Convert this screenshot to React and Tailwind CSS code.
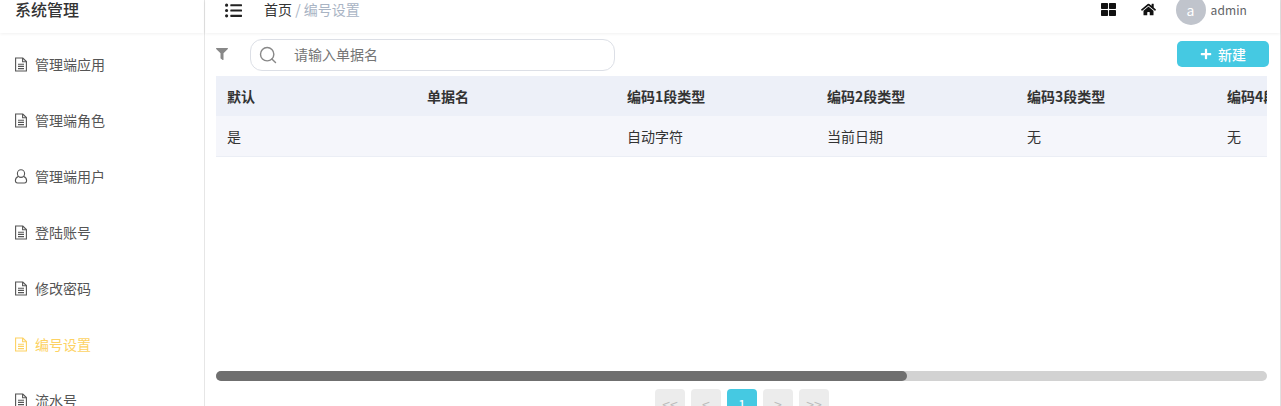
import React from 'react';
import { Search } from 'lucide-react';
import { FaThLarge, FaHome, FaListUl, FaFilter, FaPlus } from 'react-icons/fa';

const FileIcon = () => (
  <svg width="14" height="15" viewBox="0 0 14 15" fill="none" stroke="currentColor" strokeWidth="1.1">
    <path d="M1.6 1h7.2l3.6 3.6V14H1.6z" />
    <path d="M8.6 1v3.8h3.8" />
    <path d="M4 7.2h6M4 9.4h6M4 11.6h6" />
  </svg>
);

const UserIcon = () => (
  <svg width="14" height="15" viewBox="0 0 14 15" fill="none" stroke="currentColor" strokeWidth="1.1">
    <ellipse cx="7" cy="4.6" rx="3.6" ry="3.8" />
    <path d="M4.2 7.6C2.4 8.4 1.4 9.8 1.4 11.6c0 1.6.8 2.4 2.2 2.4h6.8c1.4 0 2.2-.8 2.2-2.4 0-1.8-1-3.2-2.8-4" />
  </svg>
);

const menus = [
  { name: '管理端应用', icon: <FileIcon /> },
  { name: '管理端角色', icon: <FileIcon /> },
  { name: '管理端用户', icon: <UserIcon /> },
  { name: '登陆账号', icon: <FileIcon /> },
  { name: '修改密码', icon: <FileIcon /> },
  { name: '编号设置', icon: <FileIcon />, active: true },
  { name: '流水号', icon: <FileIcon /> },
];

const columns = ['默认', '单据名', '编码1段类型', '编码2段类型', '编码3段类型', '编码4段类型'];
const row = ['是', '', '自动字符', '当前日期', '无', '无'];
const pages = ['<<', '<', '1', '>', '>>'];

export default function App() {
  return (
    <div className="flex h-[406px] w-[1281px] overflow-hidden bg-white text-[14px] text-[#333] font-['Noto_Sans_CJK_SC',sans-serif]">
      <aside className="w-[205px] shrink-0 border-r border-[#e6e6e6]">
        <div className="flex h-[33px] items-end pb-[12px] pl-[15px] text-[16px] font-medium leading-[24px] text-[#333] shadow-[0_1px_3px_rgba(0,0,0,0.06)]">
          系统管理
        </div>
        <nav className="pt-[3px]">
          {menus.map((m) => (
            <div
              key={m.name}
              className={`flex h-[56px] items-center gap-[7px] pl-[14px] ${m.active ? 'text-[#fdd263]' : 'text-[#555]'}`}
            >
              {m.icon}
              <span>{m.name}</span>
            </div>
          ))}
        </nav>
      </aside>

      <main className="flex min-w-0 flex-1 flex-col border-r border-[#e0e0e0]">
        <header className="flex h-[33px] shrink-0 items-center pb-[13px] shadow-[0_1px_3px_rgba(0,0,0,0.06)]">
          <FaListUl className="ml-[20px] text-[17px] text-[#222]" />
          <div className="mb-[2px] ml-[22px] whitespace-nowrap">
            <span className="text-[#333]">首页</span>
            <span className="text-[#a9b4c4]"> / 编号设置</span>
          </div>
          <div className="ml-auto flex items-center">
            <FaThLarge className="mb-[2px] text-[15px] text-[#111]" />
            <FaHome className="mb-[2px] ml-[25px] text-[15px] text-[#111]" />
            <div className="ml-[20px] flex h-[30px] w-[30px] items-center justify-center rounded-full bg-[#c0c4cc] text-[14px] text-white">
              a
            </div>
            <span className="ml-[5px] mr-[33px] text-[12px] tracking-[0.1px] text-[#606266]">admin</span>
          </div>
        </header>

        <div className="flex h-[43px] shrink-0 items-center pl-[11px] pr-[11px] pt-[1px]">
          <FaFilter className="mb-[2px] text-[12px] text-[#888]" />
          <div className="ml-[22px] flex h-[32px] w-[365px] items-center rounded-[12px] border border-[#dcdfe6] pl-[7px]">
            <Search size={20} strokeWidth={1.7} className="mb-[1px] text-[#888]" />
            <span className="mb-[1px] ml-[16px] text-[#757575]">请输入单据名</span>
          </div>
          <button className="mb-[2px] ml-auto flex h-[26px] w-[92px] items-center justify-center gap-[6px] rounded-[5px] bg-[#45c9e2] font-medium text-white">
            <FaPlus className="text-[12px]" />
            新建
          </button>
        </div>

        <div className="ml-[11px] mr-[13px] shrink-0 overflow-hidden">
          <div className="flex h-[40px] w-[1400px] items-center bg-[#edf0f8] font-bold text-[#333]">
            {columns.map((c) => (
              <div key={c} className="w-[200px] shrink-0 pl-[11px]">{c}</div>
            ))}
          </div>
          <div className="flex h-[41px] w-[1400px] items-center border-b border-[#ebeef5] bg-[#f5f6fb]">
            {row.map((c, i) => (
              <div key={i} className="w-[200px] shrink-0 pl-[11px]">{c}</div>
            ))}
          </div>
        </div>

        <div className="ml-[11px] mr-[13px] mt-[214px] h-[10px] shrink-0 rounded-[5px] bg-[#d2d2d2]">
          <div className="h-full w-[691px] rounded-[5px] bg-[#6f6f6f]" />
        </div>

        <div className="mt-[8px] flex justify-center gap-[6px] pr-[1px]">
          {pages.map((p) => (
            <div
              key={p}
              className={`flex h-[30px] w-[30px] shrink-0 items-center justify-center rounded-[4px] ${p === '1' ? 'bg-[#45c9e2] text-white' : 'bg-[#ececec] text-[#bbb]'}`}
            >
              {p}
            </div>
          ))}
        </div>
      </main>
    </div>
  );
}
